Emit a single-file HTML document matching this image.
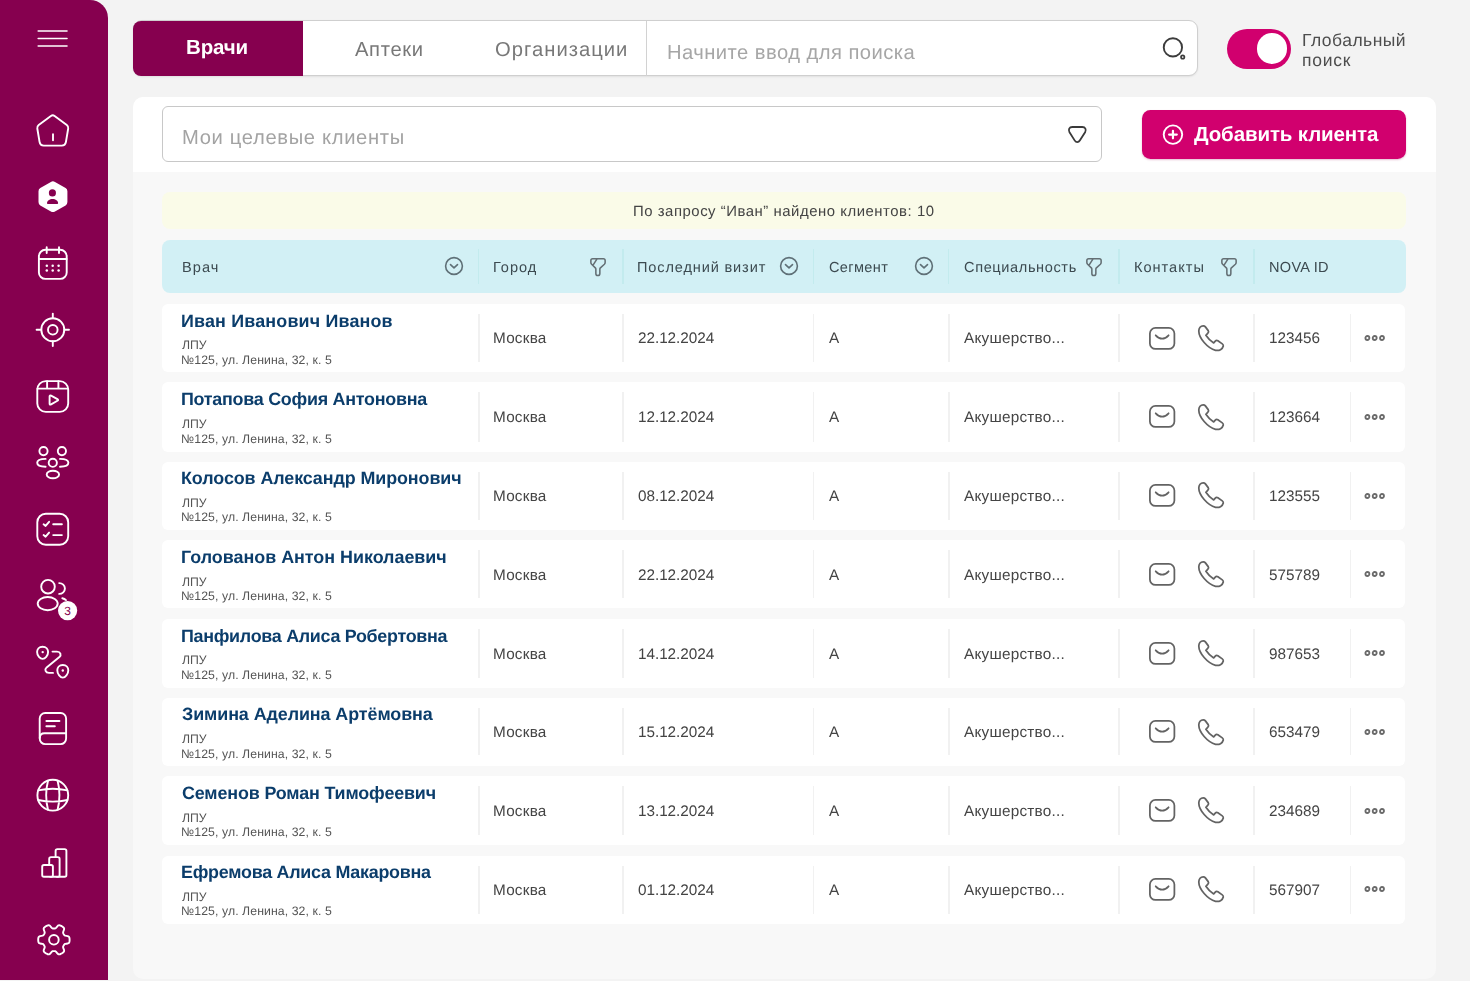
<!DOCTYPE html>
<html lang="ru"><head><meta charset="utf-8"><title>Клиенты</title>
<style>
*{box-sizing:border-box;margin:0;padding:0}
html,body{width:1470px;height:981px;overflow:hidden;background:#f3f3f3;}
body{position:relative;font-family:"Liberation Sans","DejaVu Sans",sans-serif;color:#444444;text-rendering:geometricPrecision}
.abs{position:absolute;white-space:nowrap}
#side{position:absolute;left:0;top:0;width:108px;height:979.6px;background:#86004f;border-top-right-radius:18px}
#side svg{position:absolute;left:0;top:0}
#tabs{position:absolute;left:132.5px;top:20.3px;width:1065px;height:56px;background:#fff;border:1.2px solid #cfcfcf;border-radius:9px;box-shadow:0 1px 2px rgba(0,0,0,.08)}
#tab1{position:absolute;left:133px;top:20.8px;width:170px;height:55px;background:#86004f;border-radius:8px 0 0 8px}
.t{position:absolute;white-space:nowrap;line-height:20px;will-change:transform}
#panel{position:absolute;left:132.9px;top:96.8px;width:1302.9px;height:881.9px;background:#f8f8f8;border-radius:10px;overflow:hidden}
#panelTop{position:absolute;left:0;top:0;width:100%;height:75.2px;background:#fff}
#filter{position:absolute;left:162.2px;top:106.4px;width:939.6px;height:55.8px;border:1.2px solid #c8c8c8;border-radius:6px;background:#fff}
#addBtn{position:absolute;left:1142px;top:110px;width:264.2px;height:48.8px;background:#d1006e;border-radius:8.5px;box-shadow:0 1px 2px rgba(150,0,80,.25)}
#banner{position:absolute;left:162.2px;top:192.2px;width:1243.4px;height:37.3px;background:#fafbe8;border-radius:8px}
#thead{position:absolute;left:162.2px;top:240px;width:1243.4px;height:52.8px;background:#d2f0f5;border-radius:8px}
.hd{position:absolute;top:9.3px;width:1.5px;height:34.7px;background:#c3ebee}
.row{position:absolute;left:162.2px;width:1243.2px;height:68px;background:#fff;border-radius:6px}
.rd{position:absolute;top:10.1px;width:1.6px;background:#f1f1f1}
.name{font-weight:700;color:#0b3d6b}
.sm{color:#555}
.c{color:#444444}
svg{overflow:visible}
</style></head><body>
<nav id="side"><svg width="108" height="980" viewBox="0 0 108 980"><g fill="none" stroke="#fff" stroke-width="1.9" stroke-linecap="round" stroke-linejoin="round">
<path d="M38.2 31H67M38.2 38.5H67M38.2 46H67" stroke-width="1.6"/>
<path d="M50.9 115.9 Q52.75 114.5 54.6 115.9 L66.8 124.9 Q68.6 126.3 68.2 128.5 L65.9 142.2 Q65.3 145.6 61.8 145.6 H43.7 Q40.2 145.6 39.6 142.2 L37.3 128.5 Q36.9 126.3 38.7 124.9 Z"/><path d="M53 134.2V140.2"/>
<rect x="38.9" y="249.8" width="27.8" height="29.1" rx="6.5"/><path d="M46.7 247.2V253M59 247.2V253M39 259H66.6"/>
<g fill="#fff" stroke="none"><circle cx="46.8" cy="265.8" r="1.25"/><circle cx="46.8" cy="270.5" r="1.25"/><circle cx="52.7" cy="265.8" r="1.25"/><circle cx="52.7" cy="270.5" r="1.25"/><circle cx="58.6" cy="265.8" r="1.25"/><circle cx="58.6" cy="270.5" r="1.25"/></g>
<circle cx="52.8" cy="329.8" r="11.5"/><circle cx="52.8" cy="329.8" r="4.8"/><path d="M52.8 313.6V318.3M52.8 341.3V346M36.6 329.8H41.3M64.3 329.8H69"/>
<rect x="37.3" y="381.1" width="30.9" height="30.8" rx="8.5"/><path d="M37.5 388.6H68M47.1 381.3V388.6M58.4 381.3V388.6"/><path d="M49.6 396.6 Q49.6 394.9 51.1 395.7 L57.4 399.2 Q58.8 400 57.4 400.8 L51.1 404.4 Q49.6 405.2 49.6 403.5 Z"/>
<circle cx="43.5" cy="451.1" r="4.1"/><circle cx="61.9" cy="451.1" r="4.1"/><circle cx="52.8" cy="462.8" r="4.1"/><ellipse cx="52.9" cy="474.5" rx="6.2" ry="3.8"/>
<path d="M45.6 458.9 C41 458.9 37.2 460.4 37.2 462.8 C37.2 465.2 41 466.7 45.6 466.7"/><path d="M60 458.9 C64.6 458.9 68.4 460.4 68.4 462.8 C68.4 465.2 64.6 466.7 60 466.7"/>
<rect x="37.3" y="513.8" width="30.9" height="30.9" rx="8.5"/><path d="M43.6 524.3L45.6 525.9L49.1 521.8M53.2 524.2H61.9M43.6 535.1L45.6 536.7L49.1 532.6M53.2 535.1H61.9"/>
<circle cx="48" cy="586.7" r="6.8"/><ellipse cx="47.7" cy="603.6" rx="10" ry="6.6"/><path d="M59.2 583.1 A5.7 5.4 0 0 1 59.2 593.9"/><path d="M62.3 598.3 Q64.6 598.8 66 600.2"/>
<path d="M42.6 646.8 C46.2 646.8 48.1 649.4 48.1 652 C48.1 656 45 658.9 42.6 658.9 C40.2 658.9 37.1 656 37.1 652 C37.1 649.4 39 646.8 42.6 646.8Z"/>
<path d="M62.8 665 C66.4 665 68.3 667.6 68.3 670.2 C68.3 674.2 65.2 677.6 62.8 677.6 C60.4 677.6 57.3 674.2 57.3 670.2 C57.3 667.6 59.2 665 62.8 665Z"/>
<path d="M52.5 651.6H57 C60.6 651.6 61.6 655 59.4 657.1 L46.6 667.4 C44.3 669.5 45.4 672.9 49 672.9 H53"/>
<g fill="#fff" stroke="none"><circle cx="42.7" cy="652.1" r="1.2"/><circle cx="62.8" cy="670.5" r="1.2"/></g>
<rect x="39.7" y="713" width="26.4" height="31.1" rx="5.5"/><path d="M39.8 738 C39.8 735 41.5 733.3 44.5 733.3 H66"/><path d="M46.4 720.9H59.4M46.4 726.2H54.8" stroke-width="2"/>
<circle cx="52.8" cy="795.2" r="15.4"/><path d="M48 780.7 Q44.3 795.2 48 809.7M57.6 780.7 Q61.3 795.2 57.6 809.7M38.2 790.4 Q52.8 787.2 67.4 790.4M38.2 800 Q52.8 803.2 67.4 800"/>
<rect x="55.6" y="849.1" width="10.8" height="27.6" rx="1.8"/><rect x="49.2" y="857.1" width="10.4" height="19.6" rx="1.8" fill="#86004f"/><rect x="42.2" y="865" width="10.7" height="11.7" rx="1.8" fill="#86004f"/>
<path d="M69.60 939.80 L69.58 940.48 L69.52 941.17 L69.40 941.84 L69.17 942.49 L68.69 943.08 L67.72 943.50 L66.35 943.73 L65.24 943.93 L64.60 944.23 L64.22 944.61 L63.94 945.02 L63.68 945.45 L63.44 945.88 L63.23 946.33 L63.09 946.85 L63.15 947.56 L63.53 948.62 L64.02 949.92 L64.13 950.97 L63.87 951.68 L63.42 952.20 L62.89 952.64 L62.33 953.04 L61.75 953.40 L61.15 953.72 L60.53 954.01 L59.88 954.25 L59.20 954.37 L58.46 954.25 L57.60 953.62 L56.73 952.55 L56.00 951.69 L55.41 951.28 L54.89 951.14 L54.39 951.10 L53.90 951.09 L53.41 951.10 L52.91 951.14 L52.39 951.28 L51.80 951.69 L51.07 952.55 L50.20 953.62 L49.34 954.25 L48.60 954.37 L47.92 954.25 L47.27 954.01 L46.65 953.72 L46.05 953.40 L45.47 953.04 L44.91 952.64 L44.38 952.20 L43.93 951.68 L43.67 950.97 L43.78 949.92 L44.27 948.62 L44.65 947.56 L44.71 946.85 L44.57 946.33 L44.36 945.88 L44.12 945.45 L43.86 945.02 L43.58 944.61 L43.20 944.23 L42.56 943.93 L41.45 943.73 L40.08 943.50 L39.11 943.08 L38.63 942.49 L38.40 941.84 L38.28 941.17 L38.22 940.48 L38.20 939.80 L38.22 939.12 L38.28 938.43 L38.40 937.76 L38.63 937.11 L39.11 936.52 L40.08 936.10 L41.45 935.87 L42.56 935.67 L43.20 935.37 L43.58 934.99 L43.86 934.58 L44.12 934.15 L44.36 933.72 L44.57 933.27 L44.71 932.75 L44.65 932.04 L44.27 930.98 L43.78 929.68 L43.67 928.63 L43.93 927.92 L44.38 927.40 L44.91 926.96 L45.47 926.56 L46.05 926.20 L46.65 925.88 L47.27 925.59 L47.92 925.35 L48.60 925.23 L49.34 925.35 L50.20 925.98 L51.07 927.05 L51.80 927.91 L52.39 928.32 L52.91 928.46 L53.41 928.50 L53.90 928.51 L54.39 928.50 L54.89 928.46 L55.41 928.32 L56.00 927.91 L56.73 927.05 L57.60 925.98 L58.46 925.35 L59.20 925.23 L59.88 925.35 L60.53 925.59 L61.15 925.88 L61.75 926.20 L62.33 926.56 L62.89 926.96 L63.42 927.40 L63.87 927.92 L64.13 928.63 L64.02 929.68 L63.53 930.98 L63.15 932.04 L63.09 932.75 L63.23 933.27 L63.44 933.72 L63.68 934.15 L63.94 934.58 L64.22 934.99 L64.60 935.37 L65.24 935.67 L66.35 935.87 L67.72 936.10 L68.69 936.52 L69.17 937.11 L69.40 937.76 L69.52 938.43 L69.58 939.12Z"/><circle cx="53.9" cy="939.8" r="4.8"/>
</g>
<path fill="#fff" d="M50.9 181.9 Q52.95 180.7 55 181.9 L65.6 188 Q67.4 189.1 67.4 191.3 V202.1 Q67.4 204.3 65.6 205.4 L55 211.5 Q52.95 212.7 50.9 211.5 L40.3 205.4 Q38.5 204.3 38.5 202.1 V191.3 Q38.5 189.1 40.3 188 Z"/>
<circle cx="52.4" cy="192.9" r="3.55" fill="#86004f"/><path fill="#86004f" d="M47 203.3 C47 200.6 49.6 199 52.55 199 C55.5 199 58.1 200.6 58.1 203.3 C58.1 203.8 57.8 204 57.3 204 H47.8 C47.3 204 47 203.8 47 203.3Z"/>
<circle cx="67.6" cy="610.6" r="9.6" fill="#fff"/><text x="67.6" y="614.9" text-anchor="middle" font-family="Liberation Sans, sans-serif" font-size="12" fill="#86004f">3</text></svg></nav>
<div id="tabs"></div><div id="tab1"></div>
<div class="abs" style="left:646.1px;top:21px;width:1.4px;height:55px;background:#d2d2d2"></div>
<div class="t " style="left:185.60px;top:38.40px;font-size:20.5px;letter-spacing:-0.150px;color:#fff;font-weight:700;">Врачи</div>
<div class="t " style="left:354.90px;top:39.50px;font-size:20.2px;letter-spacing:0.660px;color:#787878;">Аптеки</div>
<div class="t " style="left:495.00px;top:39.50px;font-size:20.2px;letter-spacing:1.030px;color:#787878;">Организации</div>
<div class="t " style="left:666.50px;top:42.50px;font-size:20.2px;letter-spacing:0.455px;color:#a6a6a6;">Начните ввод для поиска</div>
<svg class="abs" style="left:1160px;top:34px" width="30" height="30" viewBox="1160 34 30 30"><circle cx="1172.9" cy="47.4" r="9.15" fill="none" stroke="#3c3c3c" stroke-width="1.9"/><circle cx="1182.7" cy="57" r="1.7" fill="#fff" stroke="#3c3c3c" stroke-width="1.7"/></svg>
<div class="abs" style="left:1227.1px;top:29px;width:64.3px;height:39.5px;border-radius:20px;background:#d1006e"></div>
<div class="abs" style="left:1256.7px;top:33.2px;width:30.6px;height:30.6px;border-radius:50%;background:#fff"></div>
<div class="t " style="left:1301.70px;top:29.90px;font-size:17.5px;letter-spacing:0.478px;color:#4d4d4d;">Глобальный</div>
<div class="t " style="left:1301.70px;top:49.50px;font-size:17.5px;letter-spacing:0.775px;color:#4d4d4d;">поиск</div>
<main id="panel"><div id="panelTop"></div></main>
<div id="filter"></div>
<div class="t " style="left:182.40px;top:127.80px;font-size:20.2px;letter-spacing:0.656px;color:#a3a3a3;">Мои целевые клиенты</div>
<svg class="abs" style="left:1064px;top:122px" width="26" height="26" viewBox="1064 122 26 26"><path d="M1072.3 127 H1082.3 C1085.3 127 1086.6 129.5 1085.1 132.2 L1079.8 140.6 C1078.5 142.7 1076.1 142.7 1074.8 140.6 L1069.5 132.2 C1068 129.5 1069.3 127 1072.3 127 Z" fill="none" stroke="#3a3a3a" stroke-width="1.8" stroke-linejoin="round"/></svg>
<div id="addBtn"></div>
<svg class="abs" style="left:1160px;top:122px" width="26" height="26" viewBox="1160 122 26 26"><g fill="none" stroke="#fff" stroke-linecap="round"><circle cx="1172.95" cy="134.6" r="9.25" stroke-width="1.9"/><path d="M1169.1 134.6H1176.8M1172.95 130.9V138.3" stroke-width="2.2"/></g></svg>
<div class="t " style="left:1194.40px;top:124.80px;font-size:20.5px;letter-spacing:-0.127px;color:#fff;font-weight:700;">Добавить клиента</div>
<div id="banner"></div>
<div class="t " style="left:632.70px;top:201.80px;font-size:14.9px;letter-spacing:0.535px;color:#444;">По запросу “Иван” найдено клиентов: 10</div>
<div id="thead">
<div class="hd" style="left:315.80px"></div>
<div class="hd" style="left:459.85px"></div>
<div class="hd" style="left:650.45px"></div>
<div class="hd" style="left:785.75px"></div>
<div class="hd" style="left:956.25px"></div>
<div class="hd" style="left:1091.15px"></div>
<div class="t " style="left:19.50px;top:17.80px;font-size:14.55px;letter-spacing:1.067px;color:#3c4a50;">Врач</div>
<svg class="abs" style="left:281.60px;top:16.40px" width="20" height="20" viewBox="-10 -10 20 20"><g fill="none" stroke="#5f7077" stroke-width="1.6" stroke-linecap="round" stroke-linejoin="round"><circle r="8.4"/><path d="M-3.5 -1.4L0 1.8L3.5 -1.4"/></g></svg>
<div class="t " style="left:331.20px;top:17.80px;font-size:14.55px;letter-spacing:0.950px;color:#3c4a50;">Город</div>
<svg class="abs" style="left:427.70px;top:17.80px" width="16" height="18.4" viewBox="0 0 16 18.4"><g fill="none" stroke="#646f74" stroke-width="1.55" stroke-linecap="round" stroke-linejoin="round"><path d="M2.6 0.85 H13.4 C14.5 0.85 15.15 1.5 15.15 2.6 V4.6 C15.15 5.3 14.9 5.8 14.4 6.3 L10.4 9.9 C10 10.3 9.85 10.7 9.85 11.2 V15.4 C9.85 16.6 8.95 17.5 7.85 17.5 C6.75 17.5 5.85 16.6 5.85 15.4 V11.2 C5.85 10.7 5.7 10.3 5.3 9.9 L1.6 6.3 C1.1 5.8 0.85 5.3 0.85 4.6 V2.6 C0.85 1.5 1.5 0.85 2.6 0.85 Z M6.9 1.2 L3.2 6.9"/></g></svg>
<div class="t " style="left:474.90px;top:17.80px;font-size:14.55px;letter-spacing:0.864px;color:#3c4a50;">Последний визит</div>
<svg class="abs" style="left:616.80px;top:16.40px" width="20" height="20" viewBox="-10 -10 20 20"><g fill="none" stroke="#5f7077" stroke-width="1.6" stroke-linecap="round" stroke-linejoin="round"><circle r="8.4"/><path d="M-3.5 -1.4L0 1.8L3.5 -1.4"/></g></svg>
<div class="t " style="left:666.90px;top:17.80px;font-size:14.55px;letter-spacing:0.350px;color:#3c4a50;">Сегмент</div>
<svg class="abs" style="left:752.10px;top:16.40px" width="20" height="20" viewBox="-10 -10 20 20"><g fill="none" stroke="#5f7077" stroke-width="1.6" stroke-linecap="round" stroke-linejoin="round"><circle r="8.4"/><path d="M-3.5 -1.4L0 1.8L3.5 -1.4"/></g></svg>
<div class="t " style="left:802.20px;top:17.80px;font-size:14.55px;letter-spacing:0.625px;color:#3c4a50;">Специальность</div>
<svg class="abs" style="left:924.10px;top:17.80px" width="16" height="18.4" viewBox="0 0 16 18.4"><g fill="none" stroke="#646f74" stroke-width="1.55" stroke-linecap="round" stroke-linejoin="round"><path d="M2.6 0.85 H13.4 C14.5 0.85 15.15 1.5 15.15 2.6 V4.6 C15.15 5.3 14.9 5.8 14.4 6.3 L10.4 9.9 C10 10.3 9.85 10.7 9.85 11.2 V15.4 C9.85 16.6 8.95 17.5 7.85 17.5 C6.75 17.5 5.85 16.6 5.85 15.4 V11.2 C5.85 10.7 5.7 10.3 5.3 9.9 L1.6 6.3 C1.1 5.8 0.85 5.3 0.85 4.6 V2.6 C0.85 1.5 1.5 0.85 2.6 0.85 Z M6.9 1.2 L3.2 6.9"/></g></svg>
<div class="t " style="left:971.60px;top:17.80px;font-size:14.55px;letter-spacing:1.000px;color:#3c4a50;">Контакты</div>
<svg class="abs" style="left:1059.20px;top:17.80px" width="16" height="18.4" viewBox="0 0 16 18.4"><g fill="none" stroke="#646f74" stroke-width="1.55" stroke-linecap="round" stroke-linejoin="round"><path d="M2.6 0.85 H13.4 C14.5 0.85 15.15 1.5 15.15 2.6 V4.6 C15.15 5.3 14.9 5.8 14.4 6.3 L10.4 9.9 C10 10.3 9.85 10.7 9.85 11.2 V15.4 C9.85 16.6 8.95 17.5 7.85 17.5 C6.75 17.5 5.85 16.6 5.85 15.4 V11.2 C5.85 10.7 5.7 10.3 5.3 9.9 L1.6 6.3 C1.1 5.8 0.85 5.3 0.85 4.6 V2.6 C0.85 1.5 1.5 0.85 2.6 0.85 Z M6.9 1.2 L3.2 6.9"/></g></svg>
<div class="t " style="left:1106.90px;top:17.80px;font-size:14.55px;letter-spacing:0.283px;color:#3c4a50;">NOVA ID</div>
</div>
<div class="row" style="top:303.90px;height:68.10px">
<div class="rd" style="left:315.95px;height:47.90px"></div>
<div class="rd" style="left:459.90px;height:47.90px"></div>
<div class="rd" style="left:650.50px;height:47.90px"></div>
<div class="rd" style="left:785.80px;height:47.90px"></div>
<div class="rd" style="left:956.30px;height:47.90px"></div>
<div class="rd" style="left:1091.30px;height:47.90px"></div>
<div class="rd" style="left:1187.40px;height:47.90px"></div>
<div class="t name" style="left:19.20px;top:6.70px;font-size:17.9px;letter-spacing:0.174px;">Иван Иванович Иванов</div>
<div class="t sm" style="left:20.20px;top:31.50px;font-size:12.25px;letter-spacing:-0.100px;">ЛПУ</div>
<div class="t sm" style="left:19.20px;top:45.85px;font-size:12.25px;letter-spacing:0.092px;">№125, ул. Ленина, 32, к. 5</div>
<div class="t c" style="left:331.20px;top:25.55px;font-size:15.3px;letter-spacing:0.220px;">Москва</div>
<div class="t c" style="left:475.90px;top:25.55px;font-size:15.3px;letter-spacing:-0.044px;">22.12.2024</div>
<div class="t c" style="left:666.50px;top:25.55px;font-size:15.3px;">A</div>
<div class="t c" style="left:801.50px;top:25.55px;font-size:15.3px;letter-spacing:0.233px;">Акушерство...</div>
<svg class="abs" style="left:986.60px;top:22.70px" width="26.3" height="22.9" viewBox="0 0 26.3 22.9"><g fill="none" stroke="#636363" stroke-width="1.75" stroke-linecap="round" stroke-linejoin="round"><rect x="0.9" y="0.9" width="24.5" height="21.1" rx="5.6"/><path d="M6.7 8.3 Q13.1 15.2 19.6 8.3"/></g></svg>
<svg class="abs" style="left:1035.60px;top:20.90px" width="26.2" height="26.4" viewBox="0 0 26.2 26.4"><path fill="none" stroke="#636363" stroke-width="1.75" stroke-linecap="round" stroke-linejoin="round" d="M5.2 0.8 C2.6 0.8 0.8 3 0.8 6 C0.8 13 9.5 23.3 17.6 25.3 C21.2 26.1 24.6 24.2 25.3 21 C25.5 20.1 25.1 19.5 24.3 18.9 L19.9 15.8 C19 15.2 18 15.3 17.3 16.1 L15.7 17.9 C12.3 15.9 9.7 13.1 7.9 10.3 L9.9 8.2 C10.7 7.4 10.8 6.5 10.2 5.6 L7.4 1.9 C6.8 1.1 6.1 0.8 5.2 0.8 Z"/></svg>
<div class="t c" style="left:1107.10px;top:25.55px;font-size:15.3px;letter-spacing:-0.020px;">123456</div>
<svg class="abs" style="left:1199.80px;top:29.17px" width="26" height="10" viewBox="1362 -5 26 10"><g fill="none" stroke="#6a6a6a" stroke-width="1.8"><circle cx="1367.4" cy="0" r="2"/><circle cx="1374.7" cy="0" r="2"/><circle cx="1382" cy="0" r="2"/></g></svg>
</div>
<div class="row" style="top:382.00px;height:69.90px">
<div class="rd" style="left:315.95px;height:49.70px"></div>
<div class="rd" style="left:459.90px;height:49.70px"></div>
<div class="rd" style="left:650.50px;height:49.70px"></div>
<div class="rd" style="left:785.80px;height:49.70px"></div>
<div class="rd" style="left:956.30px;height:49.70px"></div>
<div class="rd" style="left:1091.30px;height:49.70px"></div>
<div class="rd" style="left:1187.40px;height:49.70px"></div>
<div class="t name" style="left:19.20px;top:7.37px;font-size:17.9px;letter-spacing:-0.257px;">Потапова София Антоновна</div>
<div class="t sm" style="left:20.20px;top:32.17px;font-size:12.25px;letter-spacing:-0.100px;">ЛПУ</div>
<div class="t sm" style="left:19.20px;top:46.52px;font-size:12.25px;letter-spacing:0.092px;">№125, ул. Ленина, 32, к. 5</div>
<div class="t c" style="left:331.20px;top:26.22px;font-size:15.3px;letter-spacing:0.220px;">Москва</div>
<div class="t c" style="left:475.90px;top:26.22px;font-size:15.3px;letter-spacing:-0.044px;">12.12.2024</div>
<div class="t c" style="left:666.50px;top:26.22px;font-size:15.3px;">A</div>
<div class="t c" style="left:801.50px;top:26.22px;font-size:15.3px;letter-spacing:0.233px;">Акушерство...</div>
<svg class="abs" style="left:986.60px;top:23.37px" width="26.3" height="22.9" viewBox="0 0 26.3 22.9"><g fill="none" stroke="#636363" stroke-width="1.75" stroke-linecap="round" stroke-linejoin="round"><rect x="0.9" y="0.9" width="24.5" height="21.1" rx="5.6"/><path d="M6.7 8.3 Q13.1 15.2 19.6 8.3"/></g></svg>
<svg class="abs" style="left:1035.60px;top:21.57px" width="26.2" height="26.4" viewBox="0 0 26.2 26.4"><path fill="none" stroke="#636363" stroke-width="1.75" stroke-linecap="round" stroke-linejoin="round" d="M5.2 0.8 C2.6 0.8 0.8 3 0.8 6 C0.8 13 9.5 23.3 17.6 25.3 C21.2 26.1 24.6 24.2 25.3 21 C25.5 20.1 25.1 19.5 24.3 18.9 L19.9 15.8 C19 15.2 18 15.3 17.3 16.1 L15.7 17.9 C12.3 15.9 9.7 13.1 7.9 10.3 L9.9 8.2 C10.7 7.4 10.8 6.5 10.2 5.6 L7.4 1.9 C6.8 1.1 6.1 0.8 5.2 0.8 Z"/></svg>
<div class="t c" style="left:1107.10px;top:26.22px;font-size:15.3px;letter-spacing:-0.020px;">123664</div>
<svg class="abs" style="left:1199.80px;top:29.84px" width="26" height="10" viewBox="1362 -5 26 10"><g fill="none" stroke="#6a6a6a" stroke-width="1.8"><circle cx="1367.4" cy="0" r="2"/><circle cx="1374.7" cy="0" r="2"/><circle cx="1382" cy="0" r="2"/></g></svg>
</div>
<div class="row" style="top:462.00px;height:67.90px">
<div class="rd" style="left:315.95px;height:47.70px"></div>
<div class="rd" style="left:459.90px;height:47.70px"></div>
<div class="rd" style="left:650.50px;height:47.70px"></div>
<div class="rd" style="left:785.80px;height:47.70px"></div>
<div class="rd" style="left:956.30px;height:47.70px"></div>
<div class="rd" style="left:1091.30px;height:47.70px"></div>
<div class="rd" style="left:1187.40px;height:47.70px"></div>
<div class="t name" style="left:19.20px;top:6.14px;font-size:17.9px;letter-spacing:-0.085px;">Колосов Александр Миронович</div>
<div class="t sm" style="left:20.20px;top:30.94px;font-size:12.25px;letter-spacing:-0.100px;">ЛПУ</div>
<div class="t sm" style="left:19.20px;top:45.29px;font-size:12.25px;letter-spacing:0.092px;">№125, ул. Ленина, 32, к. 5</div>
<div class="t c" style="left:331.20px;top:24.99px;font-size:15.3px;letter-spacing:0.220px;">Москва</div>
<div class="t c" style="left:475.90px;top:24.99px;font-size:15.3px;letter-spacing:-0.044px;">08.12.2024</div>
<div class="t c" style="left:666.50px;top:24.99px;font-size:15.3px;">A</div>
<div class="t c" style="left:801.50px;top:24.99px;font-size:15.3px;letter-spacing:0.233px;">Акушерство...</div>
<svg class="abs" style="left:986.60px;top:22.14px" width="26.3" height="22.9" viewBox="0 0 26.3 22.9"><g fill="none" stroke="#636363" stroke-width="1.75" stroke-linecap="round" stroke-linejoin="round"><rect x="0.9" y="0.9" width="24.5" height="21.1" rx="5.6"/><path d="M6.7 8.3 Q13.1 15.2 19.6 8.3"/></g></svg>
<svg class="abs" style="left:1035.60px;top:20.34px" width="26.2" height="26.4" viewBox="0 0 26.2 26.4"><path fill="none" stroke="#636363" stroke-width="1.75" stroke-linecap="round" stroke-linejoin="round" d="M5.2 0.8 C2.6 0.8 0.8 3 0.8 6 C0.8 13 9.5 23.3 17.6 25.3 C21.2 26.1 24.6 24.2 25.3 21 C25.5 20.1 25.1 19.5 24.3 18.9 L19.9 15.8 C19 15.2 18 15.3 17.3 16.1 L15.7 17.9 C12.3 15.9 9.7 13.1 7.9 10.3 L9.9 8.2 C10.7 7.4 10.8 6.5 10.2 5.6 L7.4 1.9 C6.8 1.1 6.1 0.8 5.2 0.8 Z"/></svg>
<div class="t c" style="left:1107.10px;top:24.99px;font-size:15.3px;letter-spacing:-0.020px;">123555</div>
<svg class="abs" style="left:1199.80px;top:28.61px" width="26" height="10" viewBox="1362 -5 26 10"><g fill="none" stroke="#6a6a6a" stroke-width="1.8"><circle cx="1367.4" cy="0" r="2"/><circle cx="1374.7" cy="0" r="2"/><circle cx="1382" cy="0" r="2"/></g></svg>
</div>
<div class="row" style="top:540.00px;height:67.90px">
<div class="rd" style="left:315.95px;height:47.70px"></div>
<div class="rd" style="left:459.90px;height:47.70px"></div>
<div class="rd" style="left:650.50px;height:47.70px"></div>
<div class="rd" style="left:785.80px;height:47.70px"></div>
<div class="rd" style="left:956.30px;height:47.70px"></div>
<div class="rd" style="left:1091.30px;height:47.70px"></div>
<div class="rd" style="left:1187.40px;height:47.70px"></div>
<div class="t name" style="left:19.20px;top:6.91px;font-size:17.9px;letter-spacing:-0.008px;">Голованов Антон Николаевич</div>
<div class="t sm" style="left:20.20px;top:31.71px;font-size:12.25px;letter-spacing:-0.100px;">ЛПУ</div>
<div class="t sm" style="left:19.20px;top:46.06px;font-size:12.25px;letter-spacing:0.092px;">№125, ул. Ленина, 32, к. 5</div>
<div class="t c" style="left:331.20px;top:25.76px;font-size:15.3px;letter-spacing:0.220px;">Москва</div>
<div class="t c" style="left:475.90px;top:25.76px;font-size:15.3px;letter-spacing:-0.044px;">22.12.2024</div>
<div class="t c" style="left:666.50px;top:25.76px;font-size:15.3px;">A</div>
<div class="t c" style="left:801.50px;top:25.76px;font-size:15.3px;letter-spacing:0.233px;">Акушерство...</div>
<svg class="abs" style="left:986.60px;top:22.91px" width="26.3" height="22.9" viewBox="0 0 26.3 22.9"><g fill="none" stroke="#636363" stroke-width="1.75" stroke-linecap="round" stroke-linejoin="round"><rect x="0.9" y="0.9" width="24.5" height="21.1" rx="5.6"/><path d="M6.7 8.3 Q13.1 15.2 19.6 8.3"/></g></svg>
<svg class="abs" style="left:1035.60px;top:21.11px" width="26.2" height="26.4" viewBox="0 0 26.2 26.4"><path fill="none" stroke="#636363" stroke-width="1.75" stroke-linecap="round" stroke-linejoin="round" d="M5.2 0.8 C2.6 0.8 0.8 3 0.8 6 C0.8 13 9.5 23.3 17.6 25.3 C21.2 26.1 24.6 24.2 25.3 21 C25.5 20.1 25.1 19.5 24.3 18.9 L19.9 15.8 C19 15.2 18 15.3 17.3 16.1 L15.7 17.9 C12.3 15.9 9.7 13.1 7.9 10.3 L9.9 8.2 C10.7 7.4 10.8 6.5 10.2 5.6 L7.4 1.9 C6.8 1.1 6.1 0.8 5.2 0.8 Z"/></svg>
<div class="t c" style="left:1107.10px;top:25.76px;font-size:15.3px;letter-spacing:-0.020px;">575789</div>
<svg class="abs" style="left:1199.80px;top:29.38px" width="26" height="10" viewBox="1362 -5 26 10"><g fill="none" stroke="#6a6a6a" stroke-width="1.8"><circle cx="1367.4" cy="0" r="2"/><circle cx="1374.7" cy="0" r="2"/><circle cx="1382" cy="0" r="2"/></g></svg>
</div>
<div class="row" style="top:618.70px;height:69.30px">
<div class="rd" style="left:315.95px;height:49.10px"></div>
<div class="rd" style="left:459.90px;height:49.10px"></div>
<div class="rd" style="left:650.50px;height:49.10px"></div>
<div class="rd" style="left:785.80px;height:49.10px"></div>
<div class="rd" style="left:956.30px;height:49.10px"></div>
<div class="rd" style="left:1091.30px;height:49.10px"></div>
<div class="rd" style="left:1187.40px;height:49.10px"></div>
<div class="t name" style="left:19.20px;top:6.98px;font-size:17.9px;letter-spacing:-0.288px;">Панфилова Алиса Робертовна</div>
<div class="t sm" style="left:20.20px;top:31.78px;font-size:12.25px;letter-spacing:-0.100px;">ЛПУ</div>
<div class="t sm" style="left:19.20px;top:46.13px;font-size:12.25px;letter-spacing:0.092px;">№125, ул. Ленина, 32, к. 5</div>
<div class="t c" style="left:331.20px;top:25.83px;font-size:15.3px;letter-spacing:0.220px;">Москва</div>
<div class="t c" style="left:475.90px;top:25.83px;font-size:15.3px;letter-spacing:-0.044px;">14.12.2024</div>
<div class="t c" style="left:666.50px;top:25.83px;font-size:15.3px;">A</div>
<div class="t c" style="left:801.50px;top:25.83px;font-size:15.3px;letter-spacing:0.233px;">Акушерство...</div>
<svg class="abs" style="left:986.60px;top:22.98px" width="26.3" height="22.9" viewBox="0 0 26.3 22.9"><g fill="none" stroke="#636363" stroke-width="1.75" stroke-linecap="round" stroke-linejoin="round"><rect x="0.9" y="0.9" width="24.5" height="21.1" rx="5.6"/><path d="M6.7 8.3 Q13.1 15.2 19.6 8.3"/></g></svg>
<svg class="abs" style="left:1035.60px;top:21.18px" width="26.2" height="26.4" viewBox="0 0 26.2 26.4"><path fill="none" stroke="#636363" stroke-width="1.75" stroke-linecap="round" stroke-linejoin="round" d="M5.2 0.8 C2.6 0.8 0.8 3 0.8 6 C0.8 13 9.5 23.3 17.6 25.3 C21.2 26.1 24.6 24.2 25.3 21 C25.5 20.1 25.1 19.5 24.3 18.9 L19.9 15.8 C19 15.2 18 15.3 17.3 16.1 L15.7 17.9 C12.3 15.9 9.7 13.1 7.9 10.3 L9.9 8.2 C10.7 7.4 10.8 6.5 10.2 5.6 L7.4 1.9 C6.8 1.1 6.1 0.8 5.2 0.8 Z"/></svg>
<div class="t c" style="left:1107.10px;top:25.83px;font-size:15.3px;letter-spacing:-0.020px;">987653</div>
<svg class="abs" style="left:1199.80px;top:29.45px" width="26" height="10" viewBox="1362 -5 26 10"><g fill="none" stroke="#6a6a6a" stroke-width="1.8"><circle cx="1367.4" cy="0" r="2"/><circle cx="1374.7" cy="0" r="2"/><circle cx="1382" cy="0" r="2"/></g></svg>
</div>
<div class="row" style="top:697.90px;height:67.70px">
<div class="rd" style="left:315.95px;height:47.50px"></div>
<div class="rd" style="left:459.90px;height:47.50px"></div>
<div class="rd" style="left:650.50px;height:47.50px"></div>
<div class="rd" style="left:785.80px;height:47.50px"></div>
<div class="rd" style="left:956.30px;height:47.50px"></div>
<div class="rd" style="left:1091.30px;height:47.50px"></div>
<div class="rd" style="left:1187.40px;height:47.50px"></div>
<div class="t name" style="left:20.20px;top:6.55px;font-size:17.9px;letter-spacing:-0.074px;">Зимина Аделина Артёмовна</div>
<div class="t sm" style="left:20.20px;top:31.35px;font-size:12.25px;letter-spacing:-0.100px;">ЛПУ</div>
<div class="t sm" style="left:19.20px;top:45.70px;font-size:12.25px;letter-spacing:0.092px;">№125, ул. Ленина, 32, к. 5</div>
<div class="t c" style="left:331.20px;top:25.40px;font-size:15.3px;letter-spacing:0.220px;">Москва</div>
<div class="t c" style="left:475.90px;top:25.40px;font-size:15.3px;letter-spacing:-0.044px;">15.12.2024</div>
<div class="t c" style="left:666.50px;top:25.40px;font-size:15.3px;">A</div>
<div class="t c" style="left:801.50px;top:25.40px;font-size:15.3px;letter-spacing:0.233px;">Акушерство...</div>
<svg class="abs" style="left:986.60px;top:22.55px" width="26.3" height="22.9" viewBox="0 0 26.3 22.9"><g fill="none" stroke="#636363" stroke-width="1.75" stroke-linecap="round" stroke-linejoin="round"><rect x="0.9" y="0.9" width="24.5" height="21.1" rx="5.6"/><path d="M6.7 8.3 Q13.1 15.2 19.6 8.3"/></g></svg>
<svg class="abs" style="left:1035.60px;top:20.75px" width="26.2" height="26.4" viewBox="0 0 26.2 26.4"><path fill="none" stroke="#636363" stroke-width="1.75" stroke-linecap="round" stroke-linejoin="round" d="M5.2 0.8 C2.6 0.8 0.8 3 0.8 6 C0.8 13 9.5 23.3 17.6 25.3 C21.2 26.1 24.6 24.2 25.3 21 C25.5 20.1 25.1 19.5 24.3 18.9 L19.9 15.8 C19 15.2 18 15.3 17.3 16.1 L15.7 17.9 C12.3 15.9 9.7 13.1 7.9 10.3 L9.9 8.2 C10.7 7.4 10.8 6.5 10.2 5.6 L7.4 1.9 C6.8 1.1 6.1 0.8 5.2 0.8 Z"/></svg>
<div class="t c" style="left:1107.10px;top:25.40px;font-size:15.3px;letter-spacing:-0.020px;">653479</div>
<svg class="abs" style="left:1199.80px;top:29.02px" width="26" height="10" viewBox="1362 -5 26 10"><g fill="none" stroke="#6a6a6a" stroke-width="1.8"><circle cx="1367.4" cy="0" r="2"/><circle cx="1374.7" cy="0" r="2"/><circle cx="1382" cy="0" r="2"/></g></svg>
</div>
<div class="row" style="top:775.90px;height:69.00px">
<div class="rd" style="left:315.95px;height:48.80px"></div>
<div class="rd" style="left:459.90px;height:48.80px"></div>
<div class="rd" style="left:650.50px;height:48.80px"></div>
<div class="rd" style="left:785.80px;height:48.80px"></div>
<div class="rd" style="left:956.30px;height:48.80px"></div>
<div class="rd" style="left:1091.30px;height:48.80px"></div>
<div class="rd" style="left:1187.40px;height:48.80px"></div>
<div class="t name" style="left:20.20px;top:7.32px;font-size:17.9px;letter-spacing:-0.139px;">Семенов Роман Тимофеевич</div>
<div class="t sm" style="left:20.20px;top:32.12px;font-size:12.25px;letter-spacing:-0.100px;">ЛПУ</div>
<div class="t sm" style="left:19.20px;top:46.47px;font-size:12.25px;letter-spacing:0.092px;">№125, ул. Ленина, 32, к. 5</div>
<div class="t c" style="left:331.20px;top:26.17px;font-size:15.3px;letter-spacing:0.220px;">Москва</div>
<div class="t c" style="left:475.90px;top:26.17px;font-size:15.3px;letter-spacing:-0.044px;">13.12.2024</div>
<div class="t c" style="left:666.50px;top:26.17px;font-size:15.3px;">A</div>
<div class="t c" style="left:801.50px;top:26.17px;font-size:15.3px;letter-spacing:0.233px;">Акушерство...</div>
<svg class="abs" style="left:986.60px;top:23.32px" width="26.3" height="22.9" viewBox="0 0 26.3 22.9"><g fill="none" stroke="#636363" stroke-width="1.75" stroke-linecap="round" stroke-linejoin="round"><rect x="0.9" y="0.9" width="24.5" height="21.1" rx="5.6"/><path d="M6.7 8.3 Q13.1 15.2 19.6 8.3"/></g></svg>
<svg class="abs" style="left:1035.60px;top:21.52px" width="26.2" height="26.4" viewBox="0 0 26.2 26.4"><path fill="none" stroke="#636363" stroke-width="1.75" stroke-linecap="round" stroke-linejoin="round" d="M5.2 0.8 C2.6 0.8 0.8 3 0.8 6 C0.8 13 9.5 23.3 17.6 25.3 C21.2 26.1 24.6 24.2 25.3 21 C25.5 20.1 25.1 19.5 24.3 18.9 L19.9 15.8 C19 15.2 18 15.3 17.3 16.1 L15.7 17.9 C12.3 15.9 9.7 13.1 7.9 10.3 L9.9 8.2 C10.7 7.4 10.8 6.5 10.2 5.6 L7.4 1.9 C6.8 1.1 6.1 0.8 5.2 0.8 Z"/></svg>
<div class="t c" style="left:1107.10px;top:26.17px;font-size:15.3px;letter-spacing:-0.020px;">234689</div>
<svg class="abs" style="left:1199.80px;top:29.79px" width="26" height="10" viewBox="1362 -5 26 10"><g fill="none" stroke="#6a6a6a" stroke-width="1.8"><circle cx="1367.4" cy="0" r="2"/><circle cx="1374.7" cy="0" r="2"/><circle cx="1382" cy="0" r="2"/></g></svg>
</div>
<div class="row" style="top:855.70px;height:68.10px">
<div class="rd" style="left:315.95px;height:47.90px"></div>
<div class="rd" style="left:459.90px;height:47.90px"></div>
<div class="rd" style="left:650.50px;height:47.90px"></div>
<div class="rd" style="left:785.80px;height:47.90px"></div>
<div class="rd" style="left:956.30px;height:47.90px"></div>
<div class="rd" style="left:1091.30px;height:47.90px"></div>
<div class="rd" style="left:1187.40px;height:47.90px"></div>
<div class="t name" style="left:19.20px;top:6.29px;font-size:17.9px;letter-spacing:-0.252px;">Ефремова Алиса Макаровна</div>
<div class="t sm" style="left:20.20px;top:31.09px;font-size:12.25px;letter-spacing:-0.100px;">ЛПУ</div>
<div class="t sm" style="left:19.20px;top:45.44px;font-size:12.25px;letter-spacing:0.092px;">№125, ул. Ленина, 32, к. 5</div>
<div class="t c" style="left:331.20px;top:25.14px;font-size:15.3px;letter-spacing:0.220px;">Москва</div>
<div class="t c" style="left:475.90px;top:25.14px;font-size:15.3px;letter-spacing:-0.044px;">01.12.2024</div>
<div class="t c" style="left:666.50px;top:25.14px;font-size:15.3px;">A</div>
<div class="t c" style="left:801.50px;top:25.14px;font-size:15.3px;letter-spacing:0.233px;">Акушерство...</div>
<svg class="abs" style="left:986.60px;top:22.29px" width="26.3" height="22.9" viewBox="0 0 26.3 22.9"><g fill="none" stroke="#636363" stroke-width="1.75" stroke-linecap="round" stroke-linejoin="round"><rect x="0.9" y="0.9" width="24.5" height="21.1" rx="5.6"/><path d="M6.7 8.3 Q13.1 15.2 19.6 8.3"/></g></svg>
<svg class="abs" style="left:1035.60px;top:20.49px" width="26.2" height="26.4" viewBox="0 0 26.2 26.4"><path fill="none" stroke="#636363" stroke-width="1.75" stroke-linecap="round" stroke-linejoin="round" d="M5.2 0.8 C2.6 0.8 0.8 3 0.8 6 C0.8 13 9.5 23.3 17.6 25.3 C21.2 26.1 24.6 24.2 25.3 21 C25.5 20.1 25.1 19.5 24.3 18.9 L19.9 15.8 C19 15.2 18 15.3 17.3 16.1 L15.7 17.9 C12.3 15.9 9.7 13.1 7.9 10.3 L9.9 8.2 C10.7 7.4 10.8 6.5 10.2 5.6 L7.4 1.9 C6.8 1.1 6.1 0.8 5.2 0.8 Z"/></svg>
<div class="t c" style="left:1107.10px;top:25.14px;font-size:15.3px;letter-spacing:-0.020px;">567907</div>
<svg class="abs" style="left:1199.80px;top:28.76px" width="26" height="10" viewBox="1362 -5 26 10"><g fill="none" stroke="#6a6a6a" stroke-width="1.8"><circle cx="1367.4" cy="0" r="2"/><circle cx="1374.7" cy="0" r="2"/><circle cx="1382" cy="0" r="2"/></g></svg>
</div>
</body></html>
